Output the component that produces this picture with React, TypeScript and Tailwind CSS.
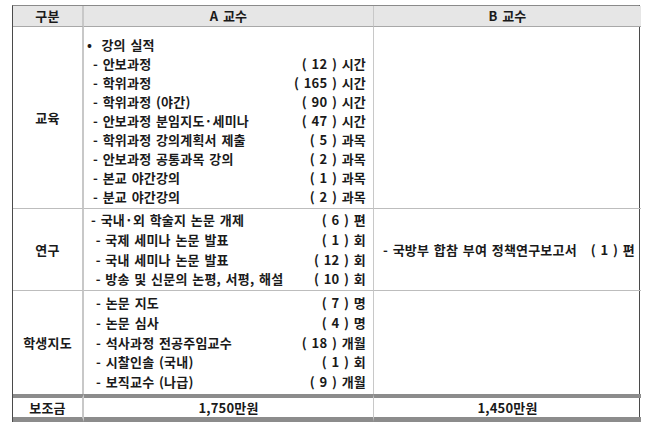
import React from "react";

type Item = { label: string; value?: string };

const EDU: Item[] = [
  { label: "- 안보과정", value: "( 12 ) 시간" },
  { label: "- 학위과정", value: "( 165 ) 시간" },
  { label: "- 학위과정 (야간)", value: "( 90 ) 시간" },
  { label: "- 안보과정 분임지도·세미나", value: "( 47 ) 시간" },
  { label: "- 학위과정 강의계획서 제출", value: "( 5 ) 과목" },
  { label: "- 안보과정 공통과목 강의", value: "( 2 ) 과목" },
  { label: "- 본교 야간강의", value: "( 1 ) 과목" },
  { label: "- 분교 야간강의", value: "( 2 ) 과목" },
];

const RESEARCH: Item[] = [
  { label: "- 국내·외 학술지 논문 개제", value: "( 6 ) 편" },
  { label: " - 국제 세미나 논문 발표", value: "( 1 ) 회" },
  { label: " - 국내 세미나 논문 발표", value: "( 12 ) 회" },
  { label: " - 방송 및 신문의 논평, 서평, 해설", value: "( 10 ) 회" },
];

const STUDENT: Item[] = [
  { label: "- 논문 지도", value: "( 7 ) 명" },
  { label: "- 논문 심사", value: "( 4 ) 명" },
  { label: "- 석사과정 전공주임교수", value: "( 18 ) 개월" },
  { label: "- 시찰인솔 (국내)", value: "( 1 ) 회" },
  { label: "- 보직교수 (나급)", value: "( 9 ) 개월" },
];

function Row({ item }: { item: Item }) {
  return (
    <div className="flex justify-between whitespace-pre">
      <span>{item.label}</span>
      <span>{item.value}</span>
    </div>
  );
}

export default function App() {
  return (
    <div
      className="w-[650px] h-[428px] bg-white pt-[5px] pl-[12px] text-[#1a1a1a] text-[13px] font-bold tracking-[0.2px] [word-spacing:1.5px]"
      style={{ fontFamily: '"Noto Sans CJK KR", "Noto Sans", sans-serif' }}
    >
      <div className="w-[628px] grid grid-cols-[71px_290px_267px] border-l-[1.5px] border-r-[1.5px] border-t border-l-[#4a4a4a] border-r-[#4a4a4a] border-t-[#8a8a8a]">
        {/* header */}
        <div className="h-[21px] bg-[#e6e6e6] flex items-center justify-center border-r-2 border-[#c8c8c8] border-b border-b-[#a8a8a8]">
          구분
        </div>
        <div className="h-[21px] bg-[#e6e6e6] flex items-center justify-center border-r border-[#c8c8c8] border-b border-b-[#a8a8a8]">
          A 교수
        </div>
        <div className="h-[21px] bg-[#e6e6e6] flex items-center justify-center border-b border-b-[#a8a8a8]">
          B 교수
        </div>

        {/* 교육 */}
        <div className="h-[182px] flex items-center justify-center border-r-2 border-[#c8c8c8] border-b border-b-[#bdbdbd]">
          교육
        </div>
        <div className="h-[182px] pt-[8px] pl-[3px] pr-[7px] leading-[19px] border-r border-[#c8c8c8] border-b border-b-[#bdbdbd]">
          <div>•&nbsp;&nbsp;강의 실적</div>
          <div className="pl-[6px]">
            {EDU.map((it) => (
              <Row key={it.label} item={it} />
            ))}
          </div>
        </div>
        <div className="h-[182px] border-b border-b-[#bdbdbd]" />

        {/* 연구 */}
        <div className="h-[82px] flex items-center justify-center border-r-2 border-[#c8c8c8] border-b border-b-[#bdbdbd]">
          연구
        </div>
        <div className="h-[82px] flex flex-col justify-center pl-[7px] pr-[7px] leading-[19.7px] border-r border-[#c8c8c8] border-b border-b-[#bdbdbd]">
          {RESEARCH.map((it) => (
            <Row key={it.label} item={it} />
          ))}
        </div>
        <div className="h-[82px] flex items-center pl-[9px] whitespace-pre border-b border-b-[#bdbdbd]">
          - 국방부 합참 부여 정책연구보고서   ( 1 ) 편
        </div>

        {/* 학생지도 */}
        <div className="h-[103px] flex items-center justify-center border-r-2 border-[#c8c8c8]">
          학생지도
        </div>
        <div className="h-[103px] flex flex-col justify-center pl-[12px] pr-[7px] leading-[19.7px] border-r border-[#c8c8c8]">
          {STUDENT.map((it) => (
            <Row key={it.label} item={it} />
          ))}
        </div>
        <div className="h-[103px]" />

        {/* 보조금 */}
        <div className="h-[28px] flex items-center justify-center border-t-4 border-t-[#8c8c8c] border-b-[5px] border-b-[#8c8c8c] border-r-2 border-r-[#c8c8c8]">
          보조금
        </div>
        <div className="h-[28px] flex items-center justify-center border-t-4 border-t-[#8c8c8c] border-b-[5px] border-b-[#8c8c8c] border-r border-r-[#c8c8c8]">
          1,750만원
        </div>
        <div className="h-[28px] flex items-center justify-center border-t-4 border-t-[#8c8c8c] border-b-[5px] border-b-[#8c8c8c]">
          1,450만원
        </div>
      </div>
    </div>
  );
}
